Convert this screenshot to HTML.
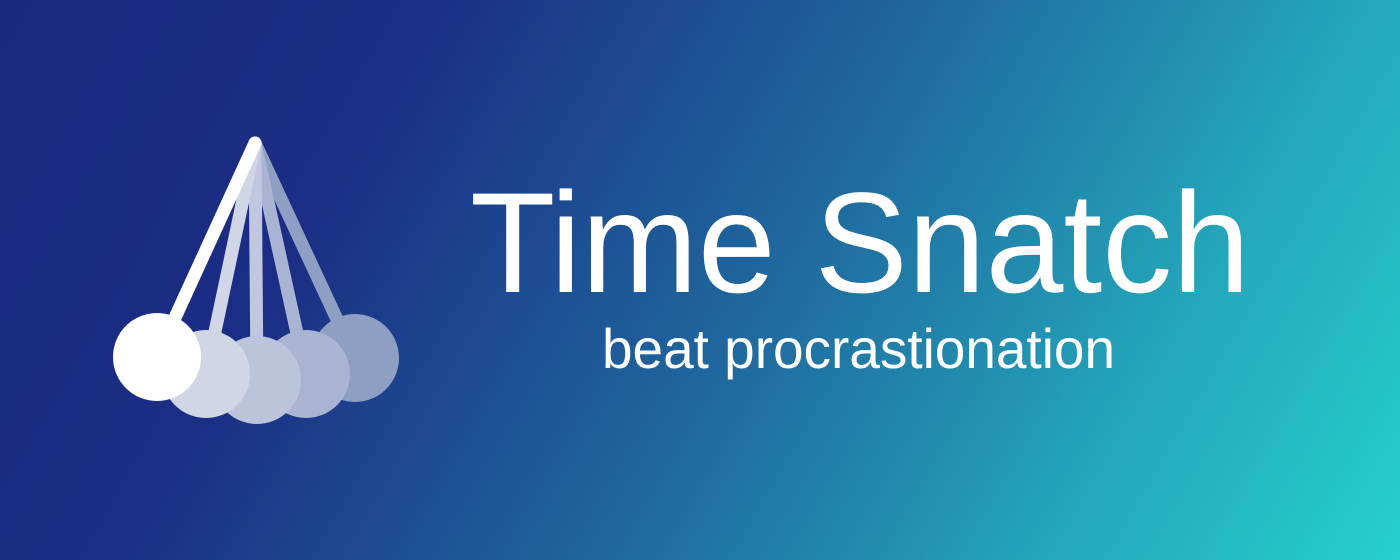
<!DOCTYPE html>
<html><head><meta charset="utf-8"><style>
html,body{margin:0;padding:0;}
body{width:1400px;height:560px;overflow:hidden;background:linear-gradient(120deg,#1a2980 0%,#1b2d84 25%,#1f6a9f 55%,#24a8bb 80%,#26d0ce 100%);}
</style></head><body>
<svg width="1400" height="560" viewBox="0 0 1400 560" style="position:absolute;left:0;top:0">
<g stroke-linecap="round" stroke-width="13">
<line x1="255" y1="143" x2="355" y2="358" stroke="#8f9fc4"/>
<line x1="255" y1="143" x2="306" y2="374" stroke="#a9b4d2"/>
<line x1="255" y1="143" x2="257" y2="380" stroke="#c0c7de"/>
<line x1="255" y1="143" x2="206" y2="374" stroke="#d1d6e6"/>
</g>
<circle cx="355" cy="358" r="44" fill="#8f9fc4"/>
<circle cx="306" cy="374" r="44" fill="#a9b4d2"/>
<circle cx="257" cy="380" r="44" fill="#bcc4dc"/>
<circle cx="206" cy="374" r="44" fill="#d1d6e6"/>
<line x1="255" y1="143" x2="157" y2="357" stroke="#fff" stroke-width="13" stroke-linecap="round"/>
<circle cx="157" cy="357" r="44" fill="#fff"/>
<text x="470" y="292" font-family="Liberation Sans, sans-serif" font-size="143" fill="#fff" textLength="780" lengthAdjust="spacingAndGlyphs">Time Snatch</text>
<text x="602" y="368" font-family="Liberation Sans, sans-serif" font-size="56" fill="#fff" textLength="513" lengthAdjust="spacingAndGlyphs">beat procrastionation</text>
</svg>
</body></html>
